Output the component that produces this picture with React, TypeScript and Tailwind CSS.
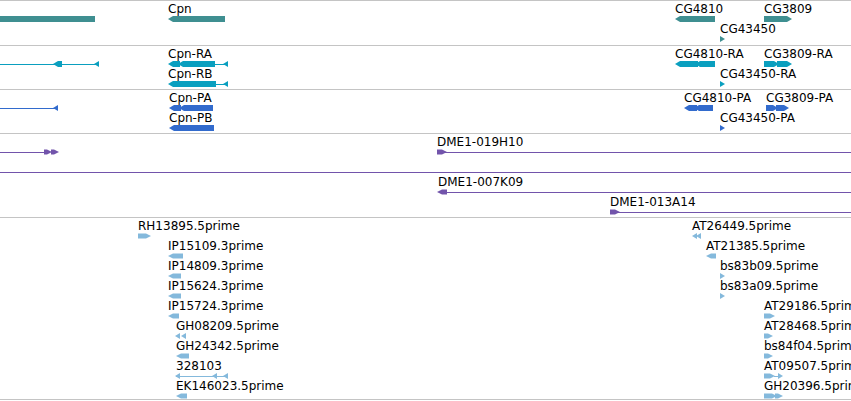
import React from "react";

type Shape =
  | { k: "bar"; x1: number; x2: number; row: number; dir: "l" | "r" | "n"; h?: number }
  | { k: "line"; x1: number; x2: number; row: number }
  | { k: "tri"; x: number; row: number; dir: "l" | "r"; w?: number };

type Label = { text: string; x: number; row: number };

type TrackProps = {
  height: number;
  color: string;
  shapes: Shape[];
  labels: Label[];
  last?: boolean;
};

const ROW = 20;

function renderShape(s: Shape, color: string, i: number) {
  if (s.k === "line") {
    const y = 18 + ROW * s.row;
    return <rect key={i} x={s.x1} y={y} width={s.x2 - s.x1} height={1} fill={color} />;
  }
  if (s.k === "tri") {
    const w = s.w ?? 5;
    const top = 15 + ROW * s.row;
    const mid = top + 3;
    const pts =
      s.dir === "r"
        ? `${s.x},${top} ${s.x + w},${mid} ${s.x},${top + 6}`
        : `${s.x + w},${top} ${s.x},${mid} ${s.x + w},${top + 6}`;
    return <polygon key={i} points={pts} fill={color} />;
  }
  const h = s.h ?? 6;
  const top = 15 + ROW * s.row + (6 - h) / 2;
  const bot = top + h;
  const mid = top + h / 2;
  const { x1, x2 } = s;
  let pts = `${x1},${top} ${x2},${top} ${x2},${bot} ${x1},${bot}`;
  if (s.dir === "l") pts = `${x1},${mid} ${x1 + 5},${top} ${x2},${top} ${x2},${bot} ${x1 + 5},${bot}`;
  if (s.dir === "r") pts = `${x1},${top} ${x2 - 5},${top} ${x2},${mid} ${x2 - 5},${bot} ${x1},${bot}`;
  return <polygon key={i} points={pts} fill={color} />;
}

function Track({ height, color, shapes, labels, last }: TrackProps) {
  return (
    <div
      className={
        "relative w-full overflow-hidden border-t border-[#c4c4c4] bg-white" +
        (last ? " border-b" : "")
      }
      style={{ height: height + (last ? 2 : 1) }}
    >
      <svg className="absolute left-0 top-0" width={851} height={height}>
        {shapes.map((s, i) => renderShape(s, color, i))}
      </svg>
      {labels.map((l) => (
        <div
          key={l.text}
          className="absolute whitespace-nowrap text-[12px] leading-[14px] text-black"
          style={{ left: l.x, top: 1 + ROW * l.row }}
        >
          {l.text}
        </div>
      ))}
    </div>
  );
}

const genes: TrackProps = {
  height: 44,
  color: "#3f8f91",
  shapes: [
    { k: "bar", x1: 0, x2: 95, row: 0, dir: "n" },
    { k: "bar", x1: 168, x2: 225, row: 0, dir: "l" },
    { k: "bar", x1: 675, x2: 715, row: 0, dir: "l" },
    { k: "bar", x1: 764, x2: 792, row: 0, dir: "r" },
    { k: "tri", x: 720, row: 1, dir: "r" },
  ],
  labels: [
    { text: "Cpn", x: 168, row: 0 },
    { text: "CG4810", x: 675, row: 0 },
    { text: "CG3809", x: 764, row: 0 },
    { text: "CG43450", x: 720, row: 1 },
  ],
};

const transcripts: TrackProps = {
  height: 43,
  color: "#0a9fbf",
  shapes: [
    { k: "line", x1: 0, x2: 98, row: 0 },
    { k: "bar", x1: 53, x2: 62, row: 0, dir: "l" },
    { k: "tri", x: 94, row: 0, dir: "l" },
    { k: "line", x1: 215, x2: 226, row: 0 },
    { k: "bar", x1: 168, x2: 180, row: 0, dir: "l" },
    { k: "bar", x1: 178, x2: 215, row: 0, dir: "l" },
    { k: "tri", x: 223, row: 0, dir: "l" },
    { k: "line", x1: 216, x2: 226, row: 1 },
    { k: "bar", x1: 168, x2: 216, row: 1, dir: "l" },
    { k: "tri", x: 223, row: 1, dir: "l" },
    { k: "bar", x1: 675, x2: 698, row: 0, dir: "l" },
    { k: "bar", x1: 695, x2: 715, row: 0, dir: "l" },
    { k: "bar", x1: 764, x2: 779, row: 0, dir: "r" },
    { k: "bar", x1: 777, x2: 792, row: 0, dir: "r" },
    { k: "tri", x: 720, row: 1, dir: "r" },
  ],
  labels: [
    { text: "Cpn-RA", x: 168, row: 0 },
    { text: "Cpn-RB", x: 168, row: 1 },
    { text: "CG4810-RA", x: 675, row: 0 },
    { text: "CG3809-RA", x: 764, row: 0 },
    { text: "CG43450-RA", x: 720, row: 1 },
  ],
};

const proteins: TrackProps = {
  height: 43,
  color: "#326bcd",
  shapes: [
    { k: "line", x1: 0, x2: 56, row: 0 },
    { k: "tri", x: 53, row: 0, dir: "l" },
    { k: "bar", x1: 169, x2: 181, row: 0, dir: "l" },
    { k: "bar", x1: 179, x2: 213, row: 0, dir: "l" },
    { k: "bar", x1: 169, x2: 214, row: 1, dir: "l" },
    { k: "bar", x1: 684, x2: 697, row: 0, dir: "l" },
    { k: "bar", x1: 694, x2: 713, row: 0, dir: "l" },
    { k: "bar", x1: 766, x2: 778, row: 0, dir: "r" },
    { k: "bar", x1: 776, x2: 789, row: 0, dir: "r" },
    { k: "tri", x: 720, row: 1, dir: "r" },
  ],
  labels: [
    { text: "Cpn-PA", x: 169, row: 0 },
    { text: "Cpn-PB", x: 169, row: 1 },
    { text: "CG4810-PA", x: 684, row: 0 },
    { text: "CG3809-PA", x: 766, row: 0 },
    { text: "CG43450-PA", x: 720, row: 1 },
  ],
};

const clones: TrackProps = {
  height: 83,
  color: "#7254ab",
  shapes: [
    { k: "line", x1: 0, x2: 46, row: 0 },
    { k: "bar", x1: 44, x2: 52, row: 0, dir: "r", h: 5 },
    { k: "bar", x1: 51, x2: 59, row: 0, dir: "r", h: 5 },
    { k: "line", x1: 437, x2: 851, row: 0 },
    { k: "bar", x1: 437, x2: 447, row: 0, dir: "r", h: 5 },
    { k: "line", x1: 0, x2: 851, row: 1 },
    { k: "line", x1: 440, x2: 851, row: 2 },
    { k: "bar", x1: 437, x2: 447, row: 2, dir: "l", h: 5 },
    { k: "line", x1: 610, x2: 851, row: 3 },
    { k: "bar", x1: 610, x2: 620, row: 3, dir: "r", h: 5 },
  ],
  labels: [
    { text: "DME1-019H10", x: 437, row: 0 },
    { text: "DME1-007K09", x: 438, row: 2 },
    { text: "DME1-013A14", x: 610, row: 3 },
  ],
};

const ests: TrackProps = {
  height: 181,
  color: "#84b9dc",
  last: true,
  shapes: [
    { k: "bar", x1: 138, x2: 151, row: 0, dir: "r", h: 5 },
    { k: "bar", x1: 168, x2: 183, row: 1, dir: "l", h: 5 },
    { k: "bar", x1: 168, x2: 181, row: 2, dir: "l", h: 5 },
    { k: "bar", x1: 168, x2: 181, row: 3, dir: "l", h: 5 },
    { k: "bar", x1: 168, x2: 179, row: 4, dir: "l", h: 5 },
    { k: "tri", x: 175, row: 5, dir: "l", w: 5 },
    { k: "tri", x: 181, row: 5, dir: "l", w: 5 },
    { k: "bar", x1: 176, x2: 189, row: 6, dir: "l", h: 5 },
    { k: "line", x1: 176, x2: 228, row: 7 },
    { k: "tri", x: 175, row: 7, dir: "l", w: 5 },
    { k: "tri", x: 212, row: 7, dir: "l", w: 5 },
    { k: "tri", x: 223, row: 7, dir: "l", w: 5 },
    { k: "bar", x1: 176, x2: 187, row: 8, dir: "l", h: 5 },
    { k: "tri", x: 692, row: 0, dir: "l", w: 5 },
    { k: "tri", x: 696, row: 0, dir: "l", w: 5 },
    { k: "bar", x1: 706, x2: 716, row: 1, dir: "l", h: 5 },
    { k: "tri", x: 720, row: 2, dir: "r", w: 5 },
    { k: "tri", x: 720, row: 3, dir: "r", w: 5 },
    { k: "bar", x1: 764, x2: 775, row: 4, dir: "r", h: 5 },
    { k: "bar", x1: 764, x2: 773, row: 5, dir: "r", h: 5 },
    { k: "bar", x1: 764, x2: 773, row: 6, dir: "r", h: 5 },
    { k: "bar", x1: 764, x2: 775, row: 7, dir: "r", h: 5 },
    { k: "line", x1: 774, x2: 780, row: 7 },
    { k: "tri", x: 778, row: 7, dir: "r", w: 5 },
    { k: "bar", x1: 764, x2: 777, row: 8, dir: "r", h: 5 },
    { k: "bar", x1: 775, x2: 783, row: 8, dir: "r", h: 5 },
  ],
  labels: [
    { text: "RH13895.5prime", x: 138, row: 0 },
    { text: "IP15109.3prime", x: 168, row: 1 },
    { text: "IP14809.3prime", x: 168, row: 2 },
    { text: "IP15624.3prime", x: 168, row: 3 },
    { text: "IP15724.3prime", x: 168, row: 4 },
    { text: "GH08209.5prime", x: 176, row: 5 },
    { text: "GH24342.5prime", x: 176, row: 6 },
    { text: "328103", x: 176, row: 7 },
    { text: "EK146023.5prime", x: 176, row: 8 },
    { text: "AT26449.5prime", x: 692, row: 0 },
    { text: "AT21385.5prime", x: 706, row: 1 },
    { text: "bs83b09.5prime", x: 720, row: 2 },
    { text: "bs83a09.5prime", x: 720, row: 3 },
    { text: "AT29186.5prime", x: 764, row: 4 },
    { text: "AT28468.5prime", x: 764, row: 5 },
    { text: "bs84f04.5prime", x: 764, row: 6 },
    { text: "AT09507.5prime", x: 764, row: 7 },
    { text: "GH20396.5prime", x: 764, row: 8 },
  ],
};

export default function App() {
  return (
    <div className="flex h-[401px] w-[851px] flex-col overflow-hidden bg-white font-['DejaVu_Sans',sans-serif]">
      <Track {...genes} />
      <Track {...transcripts} />
      <Track {...proteins} />
      <Track {...clones} />
      <Track {...ests} />
    </div>
  );
}
